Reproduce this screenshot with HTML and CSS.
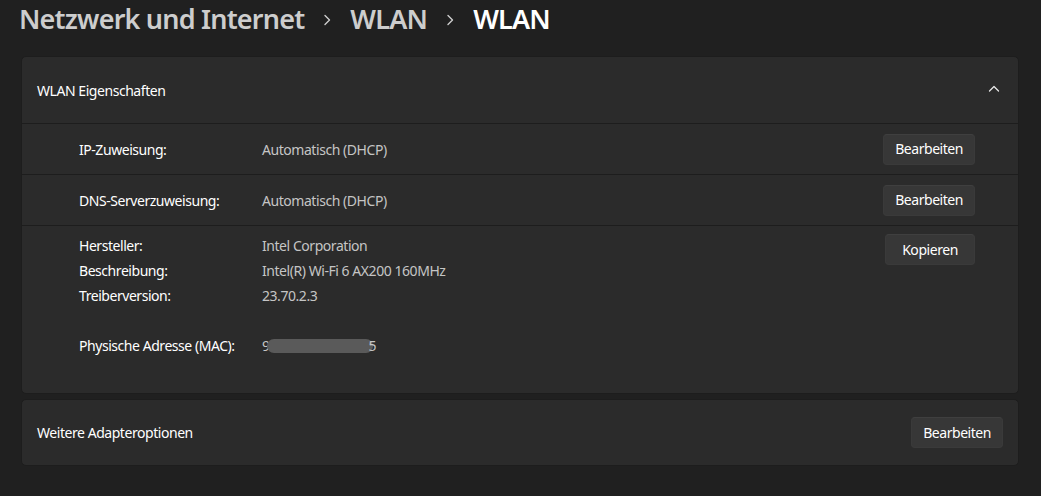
FILE: index.html
```html
<!DOCTYPE html>
<html lang="de">
<head>
<meta charset="utf-8">
<title>WLAN</title>
<link rel="stylesheet" href="styles.css">
</head>
<body>
<main class="page">
  <h1 class="crumbs">
    <span class="crumb">Netzwerk und Internet</span>
    <svg class="crumb-sep" viewBox="0 0 10 14" width="10" height="14"><path d="M3 2.5 L7.5 7 L3 11.5" fill="none" stroke="currentColor" stroke-width="1.4" stroke-linecap="round" stroke-linejoin="round"/></svg>
    <span class="crumb">WLAN</span>
    <svg class="crumb-sep" viewBox="0 0 10 14" width="10" height="14"><path d="M3 2.5 L7.5 7 L3 11.5" fill="none" stroke="currentColor" stroke-width="1.4" stroke-linecap="round" stroke-linejoin="round"/></svg>
    <span class="crumb current">WLAN</span>
  </h1>

  <section class="card expander">
    <div class="exp-head">
      <span class="exp-title">WLAN Eigenschaften</span>
      <svg class="chev" viewBox="0 0 16 16" width="16" height="16"><path d="M3.5 10 L8 5.5 L12.5 10" fill="none" stroke="currentColor" stroke-width="1.3" stroke-linecap="round" stroke-linejoin="round"/></svg>
    </div>
    <div class="row">
      <span class="label">IP-Zuweisung:</span>
      <span class="value">Automatisch (DHCP)</span>
      <button class="btn">Bearbeiten</button>
    </div>
    <div class="row">
      <span class="label">DNS-Serverzuweisung:</span>
      <span class="value">Automatisch (DHCP)</span>
      <button class="btn">Bearbeiten</button>
    </div>
    <div class="row info">
      <dl class="props">
        <dt>Hersteller:</dt><dd>Intel Corporation</dd>
        <dt>Beschreibung:</dt><dd>Intel(R) Wi-Fi 6 AX200 160MHz</dd>
        <dt>Treiberversion:</dt><dd>23.70.2.3</dd>
        <dt class="gap">Physische Adresse (MAC):</dt><dd class="gap">9<span class="redact"></span>5</dd>
      </dl>
      <button class="btn">Kopieren</button>
    </div>
  </section>

  <section class="card simple">
    <span class="simple-title">Weitere Adapteroptionen</span>
    <button class="btn">Bearbeiten</button>
  </section>
</main>
</body>
</html>
```

FILE: styles.css
```css
* { box-sizing: border-box; }
html, body {
  margin: 0;
  background: #202020;
  height: 100%;
}
body {
  font-family: "Noto Sans", "Open Sans", sans-serif;
  color: #ffffff;
  font-size: 14px;
  letter-spacing: -0.45px;
  overflow: hidden;
}
.page {
  padding: 0 22px 0 21px;
}
.crumbs {
  margin: 0 0 0 -2px;
  height: 56px;
  display: flex;
  align-items: flex-start;
  font-size: 27px;
  font-weight: 600;
  letter-spacing: -0.8px;
  line-height: 38px;
  color: #cdcdcd;
}
.crumbs .crumb { display: block; }
.crumbs .current { color: #ffffff; }
.crumb-sep {
  margin: 13px 18px 0 18px;
  color: #cdcdcd;
}
.card {
  background: #2b2b2b;
  border: 1px solid #1d1d1d;
  border-radius: 5px;
}
.expander {
  display: flex;
  flex-direction: column;
}
.exp-head {
  height: 67px;
  display: flex;
  align-items: center;
  justify-content: space-between;
  padding: 0 16px 0 15px;
  border-bottom: 1px solid #1d1d1d;
}
.chev { color: #e6e6e6; margin-top: -2px; }
.row {
  display: flex;
  align-items: center;
  height: 51px;
  padding: 0 43px 0 57px;
  border-bottom: 1px solid #1d1d1d;
}
.row .label { width: 183px; }
.row .value { flex: 1; color: #c5c5c5; }
.btn {
  font-family: inherit;
  font-size: 14px;
  letter-spacing: -0.45px;
  color: #ffffff;
  background: #373737;
  border: 1px solid #3a3a3a;
  border-top-color: #3f3f3f;
  border-radius: 4px;
  height: 31px;
  min-width: 91px;
  padding: 0 11px;
  line-height: 1;
}
.row.info {
  height: auto;
  align-items: flex-start;
  border-bottom: none;
  padding-top: 0;
  padding-bottom: 35px;
}
.props {
  flex: 1;
  margin: 7px 0 0 0;
  display: grid;
  grid-template-columns: 183px 1fr;
  line-height: 25px;
}
.props dt, .props dd { margin: 0; }
.props dd { color: #c5c5c5; }
.props .gap { margin-top: 25px; }
.row.info .btn { margin-top: 8px; min-width: 90px; }
.redact {
  display: inline-block;
  vertical-align: middle;
  width: 106px;
  height: 14px;
  margin: -2px -4px 0 -3px;
  border-radius: 7px;
  background: #5a5a5a;
}
.simple {
  margin-top: 5px;
  height: 67px;
  display: flex;
  align-items: center;
  justify-content: space-between;
  padding: 0 15px 0 15px;
}
```
